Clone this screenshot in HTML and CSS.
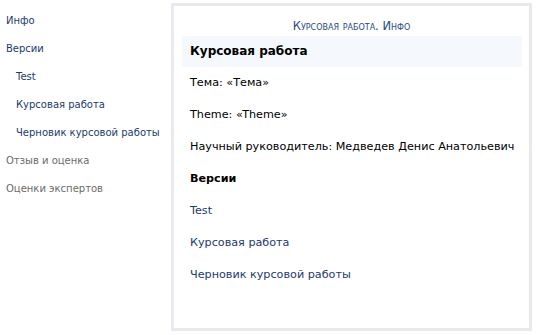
FILE: index.html
```html
<!DOCTYPE html>
<html>
<head>
    <title>Курсовая работа. Инфо</title>
    <link rel="stylesheet" href="styles.css">
</head>
<body>
    <div class="side-menu">
        <a class="menu-item" href="#">Инфо</a>
        <a class="menu-item" href="#">Версии</a>
        <a class="menu-item sub" href="#">Test</a>
        <a class="menu-item sub" href="#">Курсовая работа</a>
        <a class="menu-item sub" href="#">Черновик курсовой работы</a>
        <a class="menu-item muted" href="#">Отзыв и оценка</a>
        <a class="menu-item muted" href="#">Оценки экспертов</a>
    </div>
    <div class="content-box">
        <div class="box-title">Курсовая работа. Инфо</div>
        <div class="section-head">Курсовая работа</div>
        <div class="row">Тема: «Тема»</div>
        <div class="row">Theme: «Theme»</div>
        <div class="row">Научный руководитель: Медведев Денис Анатольевич</div>
        <div class="row bold">Версии</div>
        <a class="row link" href="#">Test</a>
        <a class="row link" href="#">Курсовая работа</a>
        <a class="row link" href="#">Черновик курсовой работы</a>
    </div>
</body>
</html>
```
FILE: styles.css
```css
body {
    margin: 0;
    display: flex;
    flex-direction: row;
    align-items: flex-start;
    font-family: "DejaVu Sans", Verdana, sans-serif;
    background-color: #fff;
    color: #000;
}

.side-menu {
    display: flex;
    flex-direction: column;
    width: 171px;
    padding-top: 14px;
    font-size: 10px;
}

.menu-item {
    display: block;
    height: 28px;
    line-height: 14px;
    padding-left: 6px;
    color: #1d3a6c;
    text-decoration: none;
}

.menu-item.sub {
    padding-left: 16px;
}

.menu-item.muted {
    color: #6a6a6a;
}

.content-box {
    margin-top: 3px;
    width: 355px;
    height: 322px;
    border: 3px solid #e6eaef;
    box-sizing: content-box;
    display: flex;
    flex-direction: column;
    padding: 0;
    font-size: 11.2px;
}

.box-title {
    text-align: center;
    font-variant: small-caps;
    font-size: 11.5px;
    color: #2a4a7c;
    padding-top: 12px;
    height: 16px;
    line-height: 16px;
}

.section-head {
    margin: 2px 7px 0 8px;
    padding-left: 8px;
    height: 31px;
    line-height: 31px;
    background-color: #f5f8fc;
    font-weight: bold;
    font-size: 12px;
}

.row {
    display: block;
    height: 32px;
    line-height: 32px;
    padding-left: 16px;
    color: #000;
    text-decoration: none;
}

.row.bold {
    font-weight: bold;
}

.row.link {
    color: #1d3a6c;
}
```
